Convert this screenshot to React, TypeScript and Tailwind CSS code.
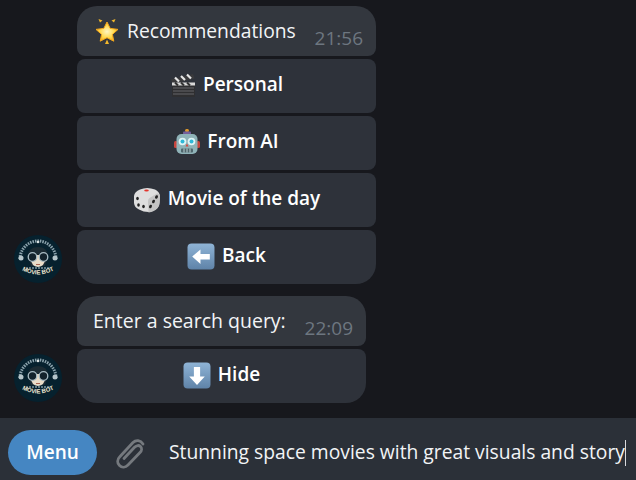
import React from 'react';

const Star = () => (
  <svg width="26" height="27" viewBox="0 0 26 27" className="shrink-0">
    <defs>
      <radialGradient id="starFill" cx="50%" cy="50%" r="60%">
        <stop offset="0%" stopColor="#fff6c4" />
        <stop offset="55%" stopColor="#ffd84a" />
        <stop offset="100%" stopColor="#f59a12" />
      </radialGradient>
    </defs>
    <path d="M13 4l3.200 6.400 7.800 1-5.600 5 1.400 6.800-6.800-3.500-6.800 3.500 1.400-6.800-5.600-5 7.800-1z" fill="url(#starFill)" stroke="#f5a81c" strokeWidth="1" strokeLinejoin="round" />
    <path d="M4.500 1l4 1.500-2.500 2zM21.500 1l-4 1.500 2.500 2zM13 21.500l2 4.500h-4z" fill="#f3b82c" />
  </svg>
);

const Clapper = () => (
  <svg width="26" height="26" viewBox="0 0 26 26" className="shrink-0">
    <rect x="2" y="11" width="23" height="14" rx="1" fill="#2f2f31" />
    <path d="M3 16h21M3 19h21M3 22h21" stroke="#66666a" strokeWidth="1" />
    <path d="M1 7.500L23 2l1.500 4.500L2.500 12z" fill="#3a3a3c" />
    <path d="M5 5.500l4 4M11 4l4 4M17 2.500l4 4" stroke="#e6e6e6" strokeWidth="2.200" />
    <rect x="2" y="10.500" width="23" height="3" fill="#d8d8d8" />
    <path d="M5 10.500l3 3M11 10.500l3 3M17 10.500l3 3" stroke="#333" strokeWidth="2" />
  </svg>
);

const Robot = () => (
  <svg width="26" height="26" viewBox="0 0 26 26" className="shrink-0">
    <rect x="11" y="0" width="4" height="3" rx="1.500" fill="#e09a2c" />
    <rect x="9" y="2.500" width="8" height="3" rx="1" fill="#75609c" />
    <rect x="0" y="12" width="3.500" height="7" rx="1.500" fill="#c8453d" />
    <rect x="22.500" y="12" width="3.500" height="7" rx="1.500" fill="#c8453d" />
    <rect x="2.500" y="5" width="21" height="20" rx="5" fill="#8fb3b8" />
    <circle cx="8.500" cy="12.500" r="3.800" fill="#dff4f6" />
    <circle cx="17.500" cy="12.500" r="3.800" fill="#dff4f6" />
    <circle cx="8.500" cy="12.500" r="2" fill="#2eb8d8" />
    <circle cx="17.500" cy="12.500" r="2" fill="#2eb8d8" />
    <path d="M13 14.500l1.500 3h-3z" fill="#d8483e" />
    <rect x="7" y="19.500" width="12" height="4" rx="1" fill="#4f666c" />
    <path d="M10 19.500v4M13 19.500v4M16 19.500v4" stroke="#b9cdd0" strokeWidth="1" />
  </svg>
);

const Dice = () => (
  <svg width="28" height="27" viewBox="0 0 28 27" className="shrink-0">
    <path d="M7 3.500Q14 .5 22 3.500q4.500 2 5 6.500l-.5 7q-.5 4-4 6.500-4 2.500-7 2.500-5 0-9.500-2.500Q1.500 21.500 1 17V10q.5-4.500 6-6.500z" fill="#dedede" />
    <path d="M15.500 26.500c4 0 11-3.500 11-9.500l.5-7c-.5-2-1.500-2.800-3-2.500l-7.500 4.500q-1.500 1-1.500 3z" fill="#c4c4c4" />
    <ellipse cx="13.500" cy="4.500" rx="2.300" ry="1.100" fill="#e3342c" />
    <ellipse cx="4.500" cy="12.500" rx="1.300" ry="1.700" fill="#222" />
    <ellipse cx="10.500" cy="20.500" rx="1.300" ry="1.700" fill="#222" />
    <ellipse cx="5.500" cy="19" rx="1.300" ry="1.700" fill="#222" />
    <ellipse cx="23.500" cy="11" rx="1.400" ry="1.800" fill="#222" transform="rotate(25 23.500 11)" />
    <ellipse cx="20.500" cy="15.500" rx="1.400" ry="1.800" fill="#222" transform="rotate(25 20.500 15.500)" />
    <ellipse cx="17.500" cy="20.500" rx="1.400" ry="1.800" fill="#222" transform="rotate(25 17.500 20.500)" />
  </svg>
);

const ArrowTile = ({ direction }: { direction: 'left' | 'down' }) => (
  <svg width="28" height="27" viewBox="0 0 27 27" preserveAspectRatio="none" className="shrink-0">
    <defs>
      <linearGradient id={`tile-${direction}`} x1="0" y1="0" x2="0" y2="1">
        <stop offset="0%" stopColor="#8fb4d6" />
        <stop offset="100%" stopColor="#5f83a8" />
      </linearGradient>
    </defs>
    <rect x="0.500" y="0.500" width="26" height="26" rx="4" fill={`url(#tile-${direction})`} />
    {direction === 'left' ? (
      <path d="M5 13.500L13 6.500v4.500h9v5.500h-9v4.500z" fill="#fff" />
    ) : (
      <path d="M13.500 23L6 14.500h4.500V5h6v9.500H21z" fill="#fff" />
    )}
  </svg>
);

const Avatar = () => (
  <svg width="48" height="48" viewBox="0 0 48 48" className="shrink-0 mb-[1px]">
    <defs>
      <path id="avatarCurve" d="M3 32q21 15 42 0" fill="none" />
    </defs>
    <circle cx="24" cy="24" r="24" fill="#06212e" />
    <path d="M6 24A18 18 0 0 1 42 24" fill="none" stroke="#8ba2ac" strokeWidth="3" strokeDasharray="1.500 1" />
    <circle cx="7" cy="23" r="2.500" fill="#b5c4c9" />
    <circle cx="41" cy="23" r="2.500" fill="#b5c4c9" />
    <circle cx="24" cy="7" r="1.300" fill="#d8e0e0" />
    <path d="M14 22q0-10 10-10t10 10l-3 9H17z" fill="#1c2b33" />
    <path d="M17 24q0-4 7-4t7 4q0 7-7 8-7-1-7-8z" fill="#e9dcc8" />
    <circle cx="18.500" cy="22" r="4.300" fill="#14232c" stroke="#a9bcc4" strokeWidth="1.300" />
    <circle cx="29.500" cy="22" r="4.300" fill="#14232c" stroke="#a9bcc4" strokeWidth="1.300" />
    <path d="M22 29.500h4" stroke="#a8634f" strokeWidth="1" />
    <path d="M12 33h24" stroke="#7d95a0" strokeWidth="1.500" strokeDasharray="2 1" />
    <text fontSize="6" fontWeight="700" fill="#efe6d2" fontFamily="'Liberation Sans', sans-serif">
      <textPath href="#avatarCurve" startOffset="50%" textAnchor="middle">MOVIE BOT</textPath>
    </text>
  </svg>
);

const KeyboardButton = ({ icon, label, last }: { icon: React.ReactNode; label: string; last?: boolean }) => (
  <div className={`h-[54px] flex items-center justify-center gap-[7px] bg-[#2e323a] rounded-[8px] pb-[2px] ${last ? 'rounded-b-[20px]' : ''}`}>
    {icon}
    <span className="text-[19px] leading-[26px] font-semibold text-white pb-[2px]">{label}</span>
  </div>
);

const Bubble = ({ children, time }: { children: React.ReactNode; time: string }) => (
  <div className="h-[50px] flex justify-between bg-[#33373e] rounded-t-[20px] rounded-b-[8px] pl-[17px] pr-[13px]">
    <div className="flex items-center gap-[7px] text-[19.3px] text-[#f2f4f6]">{children}</div>
    <span className="self-end mb-[4px] text-[19px] text-[#6d7680]">{time}</span>
  </div>
);

export default function App() {
  return (
    <div className="h-[480px] flex flex-col overflow-hidden bg-[#17181d] font-['Open_Sans',sans-serif]">
      <main className="flex-1 flex flex-col gap-[12px] pt-[6px] pl-[14px]">
        <section className="flex items-end gap-[15px]">
          <Avatar />
          <div className="w-[299px] flex flex-col gap-[3px]">
            <Bubble time="21:56">
              <Star />
              <span>Recommendations</span>
            </Bubble>
            <KeyboardButton icon={<Clapper />} label="Personal" />
            <KeyboardButton icon={<Robot />} label="From AI" />
            <KeyboardButton icon={<Dice />} label="Movie of the day" />
            <KeyboardButton icon={<ArrowTile direction="left" />} label="Back" last />
          </div>
        </section>
        <section className="flex items-end gap-[15px]">
          <Avatar />
          <div className="w-[289px] flex flex-col gap-[3px]">
            <Bubble time="22:09">
              <span className="-ml-px text-[19.5px]">Enter a search query:</span>
            </Bubble>
            <KeyboardButton icon={<ArrowTile direction="down" />} label="Hide" last />
          </div>
        </section>
      </main>
      <footer className="h-[62px] flex items-center bg-[#2b3038] pt-[7px] pl-[8px]">
        <button className="w-[89px] h-[45px] shrink-0 rounded-full bg-[#4586c2] text-[19px] font-semibold text-white">Menu</button>
        <svg width="32" height="34" viewBox="0 0 32 34" className="ml-[18px] shrink-0" fill="none" stroke="#75797e" strokeWidth="2.800" strokeLinecap="round">
          <path d="M28 8c-2.500-4-7-4.500-10-1.500L5 20.500c-3 3-3 6.500-.5 9s6 2 8.500-.5l12-12.500c2-2 2-4.500.5-6s-4-1.300-6 .7L9 22.500" />
        </svg>
        <div className="ml-[22px] flex items-center text-[19.3px] text-[#f2f4f6] whitespace-nowrap">
          <span>Stunning space movies with great visuals and story</span>
          <span className="w-px h-[26px] bg-[#d8dade]" />
        </div>
      </footer>
    </div>
  );
}
